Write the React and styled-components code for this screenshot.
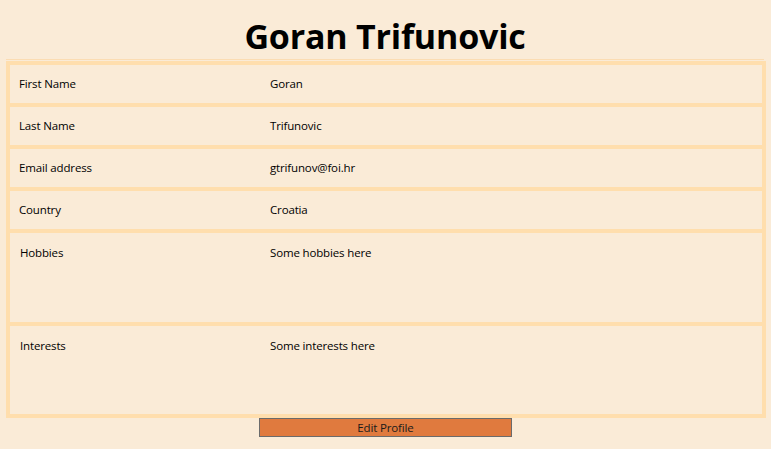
import React from "react";
import styled, { createGlobalStyle } from "styled-components";

const Global = createGlobalStyle`
  html, body {
    margin: 0;
    padding: 0;
    background: #faebd7;
  }
  body {
    font-family: "Open Sans", "Noto Sans", sans-serif;
    color: #000;
  }
`;

const Page = styled.div`
  width: 771px;
  height: 449px;
  background: #faebd7;
  display: flex;
  flex-direction: column;
  align-items: flex-start;
  padding-left: 6px;
  box-sizing: border-box;
`;

const Header = styled.header`
  width: 758px;
  height: 59px;
  border-bottom: 1px solid #fbdcb2;
  display: flex;
  align-items: center;
  justify-content: center;
  box-sizing: content-box;
`;

const Title = styled.h1`
  margin: 0;
  font-family: "Open Sans", sans-serif;
  font-weight: 700;
  font-size: 34px;
  line-height: 1;
  letter-spacing: -0.2px;
  padding-top: 12px;
`;

const Frame = styled.section`
  margin-top: 1px;
  width: 760px;
  border: 2px solid #ffdead;
  box-sizing: border-box;
  display: flex;
  flex-direction: column;
`;

const Row = styled.div`
  height: ${(p) => p.$h}px;
  border: 2px solid #ffdead;
  box-sizing: border-box;
  display: grid;
  grid-template-columns: 260px 1fr;
  align-items: ${(p) => (p.$tall ? "start" : "center")};
  padding-top: ${(p) => (p.$tall ? "12px" : "0")};
  font-size: 11.5px;
  letter-spacing: -0.15px;
  line-height: 16px;
`;

const Label = styled.span`
  padding-left: ${(p) => (p.$tall ? 10 : 9)}px;
`;

const Value = styled.span``;

const ButtonRow = styled.div`
  width: 760px;
  display: flex;
  justify-content: flex-start;
  padding-left: 253px;
  box-sizing: border-box;
`;

const Button = styled.button`
  width: 253px;
  height: 19px;
  margin: 0;
  padding: 0;
  background: #e07a3e;
  border: 1px solid #6b6b6b;
  font-family: "Open Sans", sans-serif;
  font-size: 11.5px;
  letter-spacing: -0.15px;
  line-height: 16px;
  color: #1a1a1a;
  cursor: pointer;
`;

const rows = [
  { label: "First Name", value: "Goran", h: 42 },
  { label: "Last Name", value: "Trifunovic", h: 42 },
  { label: "Email address", value: "gtrifunov@foi.hr", h: 42 },
  { label: "Country", value: "Croatia", h: 42 },
  { label: "Hobbies", value: "Some hobbies here", h: 93, tall: true },
  { label: "Interests", value: "Some interests here", h: 92, tall: true },
];

export default function App() {
  return (
    <>
      <Global />
      <Page>
        <Header>
          <Title>Goran Trifunovic</Title>
        </Header>
        <Frame>
          {rows.map((r) => (
            <Row key={r.label} $h={r.h} $tall={r.tall}>
              <Label $tall={r.tall}>{r.label}</Label>
              <Value>{r.value}</Value>
            </Row>
          ))}
        </Frame>
        <ButtonRow>
          <Button>Edit Profile</Button>
        </ButtonRow>
      </Page>
    </>
  );
}
